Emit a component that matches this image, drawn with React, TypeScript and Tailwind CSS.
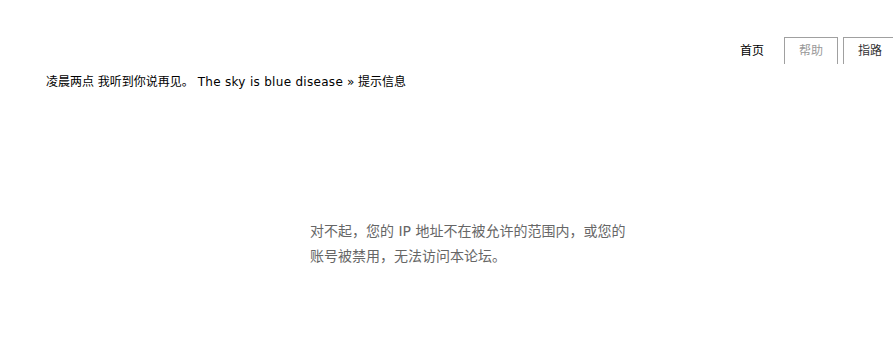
import React from "react";

const tabs = [
  { label: "首页", current: true },
  { label: "帮助", current: false, muted: true },
  { label: "指路", current: false },
];

export default function App() {
  return (
    <div
      className="w-[893px] h-[357px] overflow-hidden bg-white text-[12px] text-black"
      style={{ fontFamily: '"DejaVu Sans", "Noto Sans CJK SC", sans-serif' }}
    >
      {/* Header nav */}
      <ul className="flex gap-[5px] pl-[725px] pt-[37px] w-[950px]">
        {tabs.map((t) => (
          <li
            key={t.label}
            className={`shrink-0 w-[54px] h-[27px] flex items-center justify-center ${
              t.current
                ? "text-black"
                : "border-t border-l border-r border-[#a0a0a0]"
            } ${t.muted ? "text-[#999]" : ""} ${!t.current && !t.muted ? "text-[#333]" : ""}`}
          >
            {t.label}
          </li>
        ))}
      </ul>

      {/* Breadcrumb */}
      <div className="pl-[46px] mt-[9px] h-[18px] leading-[18px] whitespace-nowrap">
        <span>凌晨两点 我听到你说再见。</span>{" "}
        <a className="text-black tracking-[0.3px]">The sky is blue disease</a>
        <span> &raquo; </span>
        <span>提示信息</span>
      </div>

      {/* Message */}
      <div className="pl-[310px] mt-[128px]">
        <p className="text-[14px] leading-[25px] text-[#666] whitespace-nowrap">
          对不起，您的 IP 地址不在被允许的范围内，或您的
          <br />
          账号被禁用，无法访问本论坛。
        </p>
      </div>
    </div>
  );
}
